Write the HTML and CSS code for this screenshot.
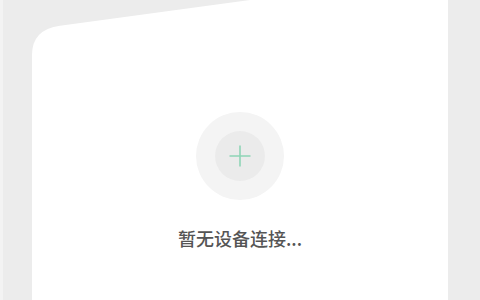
FILE: index.html
```html
<!DOCTYPE html>
<html lang="zh-CN">
<head>
<meta charset="utf-8">
<link rel="stylesheet" href="styles.css">
</head>
<body>
<div class="page">
  <main class="card">
    <div class="ring">
      <div class="core">
        <svg class="plus" width="24" height="24" viewBox="0 0 24 24" aria-hidden="true">
          <path d="M12 1.5V22.5M1.5 12H22.5" stroke="#8fd5b6" stroke-width="1.6" fill="none"/>
        </svg>
      </div>
    </div>
    <p class="empty">暂无设备连接...</p>
  </main>
</div>
</body>
</html>
```
FILE: styles.css
```css
html, body {
  margin: 0;
  padding: 0;
  background: #ececec;
}
.page {
  width: 480px;
  height: 300px;
  box-sizing: border-box;
  padding: 0 32px;
  border-left: 3px solid #f3f3f3;
  padding-left: 29px;
  display: flex;
  overflow: hidden;
}
.card {
  width: 416px;
  height: 300px;
  background: #ffffff;
  clip-path: path('M0 300 V55 Q0 29.5 28 25.7 L218 0 H416 V300 Z');
  display: flex;
  flex-direction: column;
  align-items: center;
  padding-top: 112px;
  box-sizing: border-box;
}
.ring {
  width: 88px;
  height: 88px;
  border-radius: 50%;
  background: #f4f4f4;
  display: flex;
  align-items: center;
  justify-content: center;
}
.core {
  width: 50px;
  height: 50px;
  border-radius: 50%;
  background: #ebebeb;
  display: flex;
  align-items: center;
  justify-content: center;
}
.empty {
  margin: 26px 0 0;
  font-family: "Noto Sans CJK SC", "Noto Sans", sans-serif;
  font-size: 18px;
  line-height: 24px;
  color: #555555;
  font-weight: 500;
}
```
